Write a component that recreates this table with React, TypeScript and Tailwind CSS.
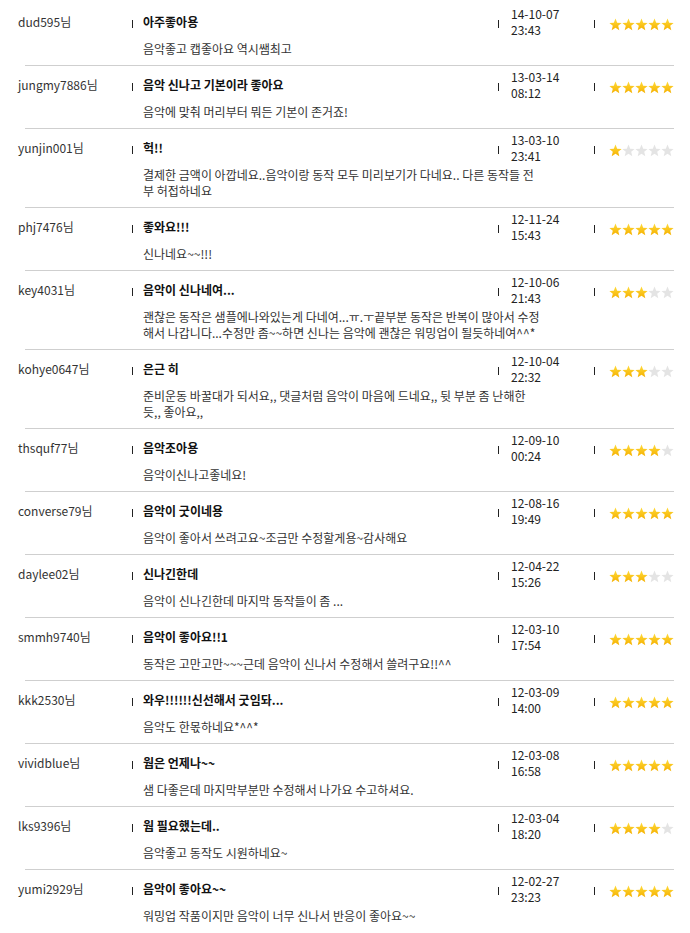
import React from "react";

type Review = {
  user: string;
  title: string;
  lines: string[];
  date: string;
  time: string;
  rating: number;
};

const reviews: Review[] = [
  { user: "dud595", title: "아주좋아용", lines: ["음악좋고 캡좋아요 역시쌤최고"], date: "14-10-07", time: "23:43", rating: 5 },
  { user: "jungmy7886", title: "음악 신나고 기본이라 좋아요", lines: ["음악에 맞춰 머리부터 뭐든 기본이 존거죠!"], date: "13-03-14", time: "08:12", rating: 5 },
  {
    user: "yunjin001",
    title: "헉!!",
    lines: ["결제한 금액이 아깝네요..음악이랑 동작 모두 미리보기가 다네요.. 다른 동작들 전", "부 허접하네요"],
    date: "13-03-10",
    time: "23:41",
    rating: 1,
  },
  { user: "phj7476", title: "좋와요!!!", lines: ["신나네요~~!!!"], date: "12-11-24", time: "15:43", rating: 5 },
  {
    user: "key4031",
    title: "음악이 신나네여...",
    lines: [
      "괜찮은 동작은 샘플에나와있는게 다네여...ㅠ.ㅜ끝부분 동작은 반복이 많아서 수정",
      "해서 나갑니다...수정만 좀~~하면 신나는 음악에 괜찮은 워밍업이 될듯하네여^^*",
    ],
    date: "12-10-06",
    time: "21:43",
    rating: 3,
  },
  {
    user: "kohye0647",
    title: "은근 히",
    lines: ["준비운동 바꿀대가 되서요,, 댓글처럼 음악이 마음에 드네요,, 뒷 부분 좀 난해한", "듯,, 좋아요,,"],
    date: "12-10-04",
    time: "22:32",
    rating: 3,
  },
  { user: "thsquf77", title: "음악조아용", lines: ["음악이신나고좋네요!"], date: "12-09-10", time: "00:24", rating: 4 },
  { user: "converse79", title: "음악이 굿이네용", lines: ["음악이 좋아서 쓰려고요~조금만 수정할게용~감사해요"], date: "12-08-16", time: "19:49", rating: 5 },
  { user: "daylee02", title: "신나긴한데", lines: ["음악이 신나긴한데 마지막 동작들이 좀 ..."], date: "12-04-22", time: "15:26", rating: 3 },
  { user: "smmh9740", title: "음악이 좋아요!!1", lines: ["동작은 고만고만~~~근데 음악이 신나서 수정해서 쓸려구요!!^^"], date: "12-03-10", time: "17:54", rating: 5 },
  { user: "kkk2530", title: "와우!!!!!!신선해서 굿임돠...", lines: ["음악도 한몫하네요*^^*"], date: "12-03-09", time: "14:00", rating: 5 },
  { user: "vividblue", title: "웜은 언제나~~", lines: ["샘 다좋은데 마지막부분만 수정해서 나가요 수고하셔요."], date: "12-03-08", time: "16:58", rating: 5 },
  { user: "lks9396", title: "웜 필요했는데..", lines: ["음악좋고 동작도 시원하네요~"], date: "12-03-04", time: "18:20", rating: 4 },
  { user: "yumi2929", title: "음악이 좋아요~~", lines: ["워밍업 작품이지만 음악이 너무 신나서 반응이 좋아요~~"], date: "12-02-27", time: "23:23", rating: 5 },
];

const Star = ({ on }: { on: boolean }) => (
  <svg width="13" height="13" viewBox="0 0 24 24">
    <defs>
      <linearGradient id="starGold" x1="0" y1="0" x2="0" y2="1">
        <stop offset="0" stopColor="#ffdb3a" />
        <stop offset="1" stopColor="#f5b000" />
      </linearGradient>
    </defs>
    <polygon
      points="12,1 15.1,8.6 23.3,9.2 17,14.5 19,22.6 12,18.2 5,22.6 7,14.5 0.7,9.2 8.9,8.6"
      fill={on ? "url(#starGold)" : "#e4e4e4"}
    />
  </svg>
);

const Bar = () => <div className="w-px h-[8px] mt-[3px] bg-[#222] shrink-0" />;

const Row = ({ r }: { r: Review }) => (
  <div className="pt-[3px] pb-[8px]">
    {/* top line: user | title | date | stars */}
    <div className="flex h-[32px] items-center">
      <div className="w-[132px] pl-[18px] text-[#333] whitespace-nowrap">{r.user}님</div>
      <Bar />
      <div className="w-[365px] pl-[10px] font-bold text-[#111] whitespace-nowrap">{r.title}</div>
      <Bar />
      <div className="w-[95px] pl-[12px] leading-[16px] text-[#222]">
        <div>{r.date}</div>
        <div>{r.time}</div>
      </div>
      <Bar />
      <div className="pl-[14px] mt-[4px] flex">
        {[0, 1, 2, 3, 4].map((i) => (
          <Star key={i} on={i < r.rating} />
        ))}
      </div>
    </div>
    <div className="pl-[143px] mt-[3px] leading-[16px] text-[#333]">
      {r.lines.map((l, i) => (
        <div key={i} className="whitespace-nowrap">
          {l}
        </div>
      ))}
    </div>
  </div>
);

export default function App() {
  return (
    <div className="w-[690px] bg-white pt-[3px] text-[12px] font-['Noto_Sans_CJK_KR','Noto_Sans',sans-serif]">
      {reviews.map((r, i) => (
        <div key={r.user}>
          <Row r={r} />
          {i < reviews.length - 1 && <div className="ml-[25px] w-[649px] h-px bg-[#cfcfcf]" />}
        </div>
      ))}
    </div>
  );
}
